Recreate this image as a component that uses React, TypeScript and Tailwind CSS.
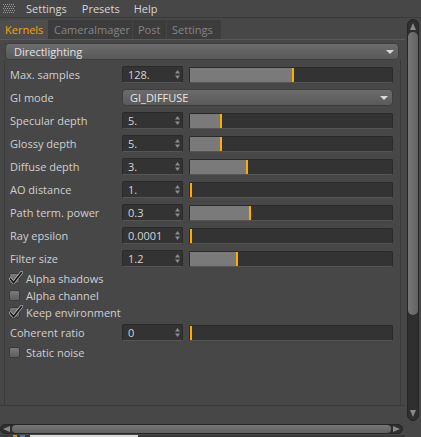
import React from "react";

type Param = { label: string; value: string; fill: number };

const topParams: Param[] = [
  { label: "Specular depth", value: "5.", fill: 30 },
  { label: "Glossy depth", value: "5.", fill: 30 },
  { label: "Diffuse depth", value: "3.", fill: 56 },
  { label: "AO distance", value: "1.", fill: 0 },
  { label: "Path term. power", value: "0.3", fill: 59 },
  { label: "Ray epsilon", value: "0.0001", fill: 0 },
  { label: "Filter size", value: "1.2", fill: 46 },
];

function Spin() {
  return (
    <svg width="5" height="9" viewBox="0 0 5 9" className="shrink-0">
      <path d="M2.5 0 L5 3.5 L0 3.5 Z" fill="#8c8c8c" />
      <path d="M2.5 9 L5 5.5 L0 5.5 Z" fill="#8c8c8c" />
    </svg>
  );
}

function NumberInput({ value }: { value: string }) {
  return (
    <div className="flex h-[17px] w-[61px] shrink-0 items-center justify-between rounded-[2px] border border-[#2a2a2a] border-b-[#555] bg-[#333333] pl-[5px] pr-[2px] text-[#d4d4d4]">
      <span>{value}</span>
      <Spin />
    </div>
  );
}

function Slider({ fill }: { fill: number }) {
  return (
    <div className="ml-[6px] flex h-[16px] w-[204px] shrink-0 items-stretch rounded-[2px] border border-[#2a2a2a] border-b-[#555] bg-[#333333]">
      <div className="bg-[#7a7a7a]" style={{ width: fill }} />
      <div className="w-[2px] bg-[#ffab00]" />
    </div>
  );
}

function Row({ p }: { p: Param }) {
  return (
    <div className="flex h-[23px] items-center">
      <div className="w-[117px] shrink-0 pl-[5px] text-[#cfcfcf]">{p.label}</div>
      <NumberInput value={p.value} />
      <Slider fill={p.fill} />
    </div>
  );
}

function Check({ label, checked }: { label: string; checked?: boolean }) {
  return (
    <div className="flex h-[17px] items-center pl-[4px]">
      <div className="relative h-[11px] w-[11px] rounded-[2px] border border-[#3a3a3a] bg-gradient-to-b from-[#7a7a7a] to-[#5e5e5e]">
        {checked && (
          <svg width="14" height="13" viewBox="0 0 14 13" className="absolute left-[-1px] top-[-3px]">
            <path d="M1.5 8 L4.5 11.5 L12.5 1.5" fill="none" stroke="#c8c8c8" strokeWidth="3" strokeLinecap="round" />
            <path d="M1.5 8 L4.5 11.5 L12.5 1.5" fill="none" stroke="#1a1a1a" strokeWidth="1.9" strokeLinecap="round" />
          </svg>
        )}
      </div>
      <span className="ml-[6px] text-[#cfcfcf]">{label}</span>
    </div>
  );
}

function Grip() {
  const dots = [];
  for (let y = 0; y < 10; y += 2)
    for (let x = 0; x < 12; x += 2) dots.push(<rect key={`${x}-${y}`} x={x + (y % 4 ? 1 : 0)} y={y} width="1" height="1" fill="#9a9a9a" />);
  return (
    <svg width="13" height="10" viewBox="0 0 13 10">
      {dots}
    </svg>
  );
}

export default function App() {
  return (
    <div className="flex h-[437px] w-[421px] flex-col overflow-hidden bg-[#474747] font-['Open_Sans',sans-serif] text-[11px] leading-none">
      {/* menu bar */}
      <div className="flex h-[18px] shrink-0 items-center border-b border-[#3b3b3b] text-[#d6d6d6]">
        <div className="ml-[3px] flex w-[23px]">
          <Grip />
        </div>
        <span>Settings</span>
        <span className="ml-[15px]">Presets</span>
        <span className="ml-[14px]">Help</span>
      </div>

      <div className="flex flex-1">
        <div className="flex w-[405px] flex-col">
          {/* tabs */}
          <div className="flex h-[22px] items-end border-b border-[#5a5a5a]">
            <div className="flex h-[19px] w-[49px] items-center rounded-tl-[3px] border-r border-[#3a3a3a] bg-[#4d4d4d] pl-[5px] text-[#f2a30c]">
              Kernels
            </div>
            <div className="flex h-[19px] w-[84px] items-center border-r border-[#454545] bg-[#3c3c3c] pl-[5px] text-[#858585]">
              CameraImager
            </div>
            <div className="flex h-[19px] w-[34px] items-center border-r border-[#454545] bg-[#3c3c3c] pl-[5px] text-[#858585]">
              Post
            </div>
            <div className="flex h-[19px] w-[54px] items-center rounded-tr-[3px] bg-[#3c3c3c] pl-[5px] text-[#858585]">
              Settings
            </div>
          </div>

          {/* panel */}
          <div className="flex h-[366px] flex-col border-b border-[#3a3a3a]">
            <div className="ml-[5px] mt-[3px] flex h-[17px] w-[394px] items-center justify-between rounded-[4px] border border-[#3e3e3e] bg-gradient-to-b from-[#6c6c6c] to-[#595959] pl-[8px] pr-[4px] text-[#e2e2e2]">
              <span>Directlighting</span>
              <svg width="8" height="4" viewBox="0 0 8 4">
                <path d="M0 0 L8 0 L4 4 Z" fill="#d8d8d8" />
              </svg>
            </div>
            <div className="ml-[4px] flex w-[397px] flex-1 flex-col border-x border-[#3a3a3a] pt-[3px]">
              <Row p={{ label: "Max. samples", value: "128.", fill: 102 }} />
              <div className="flex h-[23px] items-center">
                <div className="w-[117px] shrink-0 pl-[5px] text-[#cfcfcf]">GI mode</div>
                <div className="flex h-[17px] w-[271px] items-center justify-between rounded-[4px] border border-[#3e3e3e] bg-gradient-to-b from-[#6c6c6c] to-[#5a5a5a] pl-[7px] pr-[4px] text-[#e6e6e6]">
                  <span>GI_DIFFUSE</span>
                  <svg width="8" height="4" viewBox="0 0 8 4">
                    <path d="M0 0 L8 0 L4 4 Z" fill="#d8d8d8" />
                  </svg>
                </div>
              </div>
              {topParams.map((p) => (
                <Row key={p.label} p={p} />
              ))}
              <Check label="Alpha shadows" checked />
              <Check label="Alpha channel" />
              <Check label="Keep environment" checked />
              <Row p={{ label: "Coherent ratio", value: "0", fill: 0 }} />
              <Check label="Static noise" />
            </div>
          </div>

          <div className="h-[18px]" />

          {/* horizontal scrollbar */}
          <div className="flex h-[10px] w-[403px] items-center rounded-full border border-[#262626] bg-[#2f2f2f] px-[2px]">
            <svg width="7" height="6" viewBox="0 0 7 6">
              <path d="M0 3 L7 0 L7 6 Z" fill="#8a8a8a" />
            </svg>
            <div className="mx-[2px] h-[8px] flex-1 rounded-full bg-gradient-to-b from-[#777] to-[#606060]" />
            <svg width="7" height="6" viewBox="0 0 7 6">
              <path d="M7 3 L0 0 L0 6 Z" fill="#8a8a8a" />
            </svg>
          </div>
          <div className="mt-[1px] flex h-[2px] bg-[#3a3a3a]">
            <div className="ml-[13px] w-[4px] bg-[#d88a1a]" />
            <div className="ml-[3px] w-[5px] bg-[#4a78b0]" />
            <div className="ml-[5px] w-[108px] bg-[#d8d8d8]" />
          </div>
        </div>

        {/* vertical scrollbar */}
        <div className="ml-[2px] mt-[1px] flex h-[402px] w-[12px] flex-col items-center rounded-full border border-[#262626] bg-[#2f2f2f] py-[3px]">
          <svg width="6" height="7" viewBox="0 0 6 7">
            <path d="M3 0 L6 7 L0 7 Z" fill="#8a8a8a" />
          </svg>
          <div className="mt-[2px] h-[283px] w-[10px] rounded-full bg-gradient-to-r from-[#767676] to-[#636363]" />
          <div className="flex-1" />
          <svg width="6" height="7" viewBox="0 0 6 7">
            <path d="M3 7 L6 0 L0 0 Z" fill="#8a8a8a" />
          </svg>
        </div>
      </div>
    </div>
  );
}
